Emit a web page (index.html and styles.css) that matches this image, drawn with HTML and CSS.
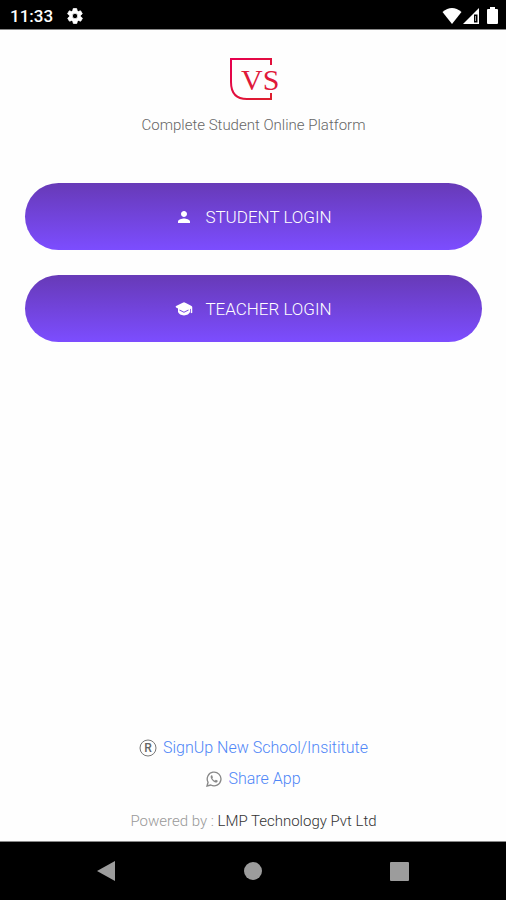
FILE: index.html
```html
<!DOCTYPE html>
<html lang="en">

<head>
    <meta charset="UTF-8">
    <meta name="viewport" content="width=device-width, initial-scale=1.0">
    <title>Complete Student Online Platform</title>
    <link rel="stylesheet" href="styles.css">
</head>

<body>
    <header class="status-bar">
        <span class="time">11:33</span>
        <svg class="gear" viewBox="0 0 24 24" width="18" height="18" fill="#fff">
            <path d="M19.4 13c.04-.3.06-.7.06-1s-.02-.7-.07-1l2.1-1.6c.2-.2.25-.4.13-.6l-2-3.5c-.12-.2-.37-.3-.6-.2l-2.5 1a7.3 7.3 0 0 0-1.7-1l-.4-2.6c0-.3-.2-.5-.5-.5h-4c-.3 0-.5.2-.5.5l-.4 2.6c-.6.25-1.15.6-1.7 1l-2.5-1c-.2-.1-.5 0-.6.2l-2 3.5c-.1.2-.1.5.1.6L4.6 11a7 7 0 0 0 0 2l-2.1 1.6c-.2.2-.25.4-.1.6l2 3.5c.1.2.4.3.6.2l2.5-1c.5.4 1.1.7 1.7 1l.4 2.6c0 .3.2.5.5.5h4c.3 0 .5-.2.5-.5l.4-2.6c.6-.3 1.2-.6 1.7-1l2.5 1c.2.1.5 0 .6-.2l2-3.5c.1-.2.1-.5-.1-.6zM12 15.6a3.6 3.6 0 1 1 0-7.2 3.6 3.6 0 0 1 0 7.2z" stroke="#fff" stroke-width="1"/>
        </svg>
        <div class="signals">
            <svg viewBox="0 0 20 16" width="20" height="16"><path d="M0.500 4Q10-4 19.500 4L10 16z" fill="#fff"/></svg>
            <svg viewBox="0 0 16 16" width="16" height="16">
                <path d="M16 0v16H0z" fill="#fff"/>
                <path d="M11 6.500h3.500v8H11z" fill="#000"/>
                <path d="M12 8h1v5h-1z" fill="#999"/>
            </svg>
            <svg class="battery" viewBox="0 0 11 17" width="11" height="17"><path d="M3 0h5v2h2q1 0 1 1v13q0 1-1 1H1q-1 0-1-1V3q0-1 1-1h2z" fill="#fff"/></svg>
        </div>
    </header>

    <main class="content">
        <svg class="logo" viewBox="0 0 50 44" width="50" height="44" role="img" aria-label="VS">
            <defs>
                <linearGradient id="logoRed" x1="0" y1="0" x2="1" y2="1">
                    <stop offset="0" stop-color="#e60050"/>
                    <stop offset="1" stop-color="#dd1f2c"/>
                </linearGradient>
            </defs>
            <path d="M42 8V2H2v23Q2 42 18 42h24v-6" fill="none" stroke="url(#logoRed)" stroke-width="2"/>
            <text class="logo-text" x="12" y="33" fill="#e0183a">VS</text>
        </svg>
        <p class="tagline">Complete Student Online Platform</p>

        <div class="logins">
            <button type="button" class="login-btn">
                <svg viewBox="0 0 24 24" width="18" height="18" fill="#fff"><path d="M12 12c2.21 0 4-1.79 4-4s-1.79-4-4-4-4 1.79-4 4 1.79 4 4 4zm0 2c-2.67 0-8 1.34-8 4v2h16v-2c0-2.660-5.330-4-8-4z"/></svg>
                STUDENT LOGIN
            </button>
            <button type="button" class="login-btn">
                <svg viewBox="0 0 24 24" width="18" height="18" fill="#fff"><path d="M12 3C9 4 5 6.500 1.500 8Q0 9 1.500 10L4 11.200V16c1 2.500 4 4.500 8 4.500s7-2 8-4.500v-4l1-.5V17q1 1 2 0V9.500q0-1-1-1.500C19 6.500 15 4 12 3zM6 12.500l6 3 6-3v1.500l-6 3-6-3z"/></svg>
                TEACHER LOGIN
            </button>
        </div>

        <footer class="links">
            <a href="#" class="link">
                <svg viewBox="0 0 18 18" width="18" height="18">
                    <circle cx="9" cy="9" r="8" fill="none" stroke="#777" stroke-width="1"/>
                    <text class="mark" x="9" y="13" text-anchor="middle" fill="#666">R</text>
                </svg>
                SignUp New School/Insititute
            </a>
            <a href="#" class="link">
                <svg viewBox="0 0 24 24" width="16" height="16" fill="none" stroke="#888" stroke-width="2">
                    <path d="M1.500 22.500l1.600-5.600A10.300 10.300 0 1 1 7.200 21z"/>
                    <path d="M8.200 6.500c-3 2 0 6.500 2.600 8.700 2.700 2.200 6 3 6.700.1.200-.8 0-1-2.800-2.200l-1.400 1.500c-1.800-.7-3-1.900-3.900-3.600l1-1.400-1-2.700c-.2-.5-.7-.6-1.200-.4z" fill="#888" stroke="none"/>
                </svg>
                Share App
            </a>
            <p class="powered">Powered by : <span class="company">LMP Technology Pvt Ltd</span></p>
        </footer>
    </main>

    <nav class="nav-bar">
        <button type="button" class="nav-btn" aria-label="Back">
            <svg viewBox="0 0 20 22" width="20" height="22"><path d="M1 11L19 1v20z" fill="#9c9c9c"/></svg>
        </button>
        <button type="button" class="nav-btn" aria-label="Home">
            <svg viewBox="0 0 20 20" width="20" height="20"><circle cx="10" cy="10" r="9" fill="#9c9c9c"/></svg>
        </button>
        <button type="button" class="nav-btn" aria-label="Recent apps">
            <svg viewBox="0 0 20 20" width="20" height="20"><rect x="0" y="1" width="19" height="19" rx="1" fill="#9c9c9c"/></svg>
        </button>
    </nav>
</body>

</html>
```

FILE: styles.css
```css
* {
    box-sizing: border-box;
}

body {
    font-family: Roboto, Arial, sans-serif;
    font-weight: 300;
    margin: 0;
    min-height: 100vh;
    display: flex;
    flex-direction: column;
    background-color: #fefefe;
}

svg {
    display: block;
    flex-shrink: 0;
}

.status-bar {
    display: flex;
    align-items: center;
    height: 30px;
    padding: 2px 8px 0 10px;
    background-color: #000;
    border-bottom: 1px solid #888;
    color: #fff;
}

.time {
    font-size: 17px;
    font-weight: 500;
}

.gear {
    margin-left: 13px;
}

.signals {
    display: flex;
    align-items: center;
    gap: 1px;
    margin-left: auto;
}

.battery {
    margin-left: 7px;
}

.content {
    flex: 1;
    display: flex;
    flex-direction: column;
    align-items: center;
    padding: 27px 24px 10px 25px;
}

.logo-text {
    font-family: "Liberation Serif", serif;
    font-size: 30px;
}

.tagline {
    margin: 14px 0 0;
    font-size: 15px;
    line-height: 20px;
    color: #666;
}

.logins {
    display: flex;
    flex-direction: column;
    gap: 25px;
    width: 100%;
    margin-top: 48px;
}

.login-btn {
    display: flex;
    align-items: center;
    justify-content: center;
    gap: 12px;
    width: 100%;
    height: 67px;
    border: none;
    border-radius: 34px;
    background: linear-gradient(#673ab7, #7c4dff);
    color: #fff;
    font-family: inherit;
    font-size: 17px;
    font-weight: 300;
    cursor: pointer;
}

.links {
    display: flex;
    flex-direction: column;
    align-items: center;
    margin-top: auto;
}

.link {
    display: flex;
    align-items: center;
    gap: 6px;
    margin-bottom: 7px;
    font-size: 16px;
    line-height: 24px;
    color: #4f86f7;
    text-decoration: none;
}

.mark {
    font-size: 12px;
    font-weight: 500;
}

.powered {
    margin: 13px 0 0;
    font-size: 15px;
    line-height: 20px;
    color: #999;
}

.company {
    color: #333;
}

.nav-bar {
    display: flex;
    justify-content: space-around;
    align-items: center;
    height: 59px;
    padding: 0 33px;
    background-color: #000;
    border-top: 1px solid #888;
}

.nav-btn {
    padding: 0;
    border: none;
    background: none;
    cursor: pointer;
}
```
